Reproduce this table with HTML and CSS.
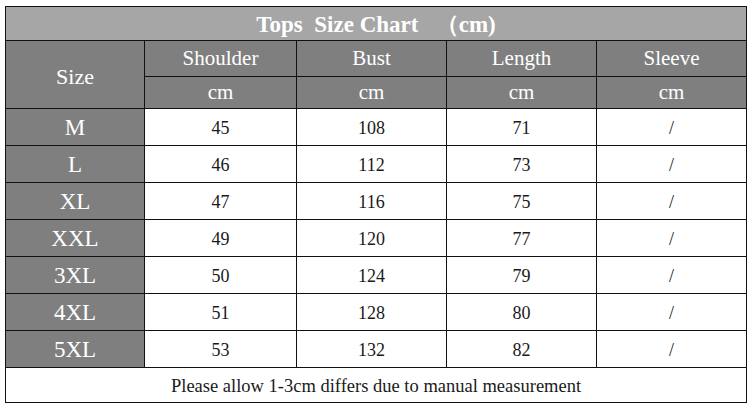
FILE: index.html
```html
<!DOCTYPE html>
<html>
<head>
<meta charset="utf-8">
<link rel="stylesheet" href="styles.css">
</head>
<body>
<table class="chart">
  <colgroup>
    <col class="c-size"><col class="c-a"><col class="c-b"><col class="c-c"><col class="c-d">
  </colgroup>
  <tr class="title-row"><td colspan="5" class="title">Tops&nbsp; Size Chart&nbsp;&nbsp; （cm)</td></tr>
  <tr class="head1">
    <td rowspan="2" class="hd size-hd">Size</td>
    <td class="hd">Shoulder</td><td class="hd">Bust</td><td class="hd">Length</td><td class="hd">Sleeve</td>
  </tr>
  <tr class="head2">
    <td class="hd">cm</td><td class="hd">cm</td><td class="hd">cm</td><td class="hd">cm</td>
  </tr>
  <tr class="row"><td class="sz">M</td><td>45</td><td>108</td><td>71</td><td>/</td></tr>
  <tr class="row"><td class="sz">L</td><td>46</td><td>112</td><td>73</td><td>/</td></tr>
  <tr class="row"><td class="sz">XL</td><td>47</td><td>116</td><td>75</td><td>/</td></tr>
  <tr class="row"><td class="sz">XXL</td><td>49</td><td>120</td><td>77</td><td>/</td></tr>
  <tr class="row"><td class="sz">3XL</td><td>50</td><td>124</td><td>79</td><td>/</td></tr>
  <tr class="row"><td class="sz">4XL</td><td>51</td><td>128</td><td>80</td><td>/</td></tr>
  <tr class="row"><td class="sz">5XL</td><td>53</td><td>132</td><td>82</td><td>/</td></tr>
  <tr class="foot-row"><td colspan="5" class="foot">Please allow 1-3cm differs due to manual measurement</td></tr>
</table>
</body>
</html>
```
FILE: styles.css
```css
html, body {
  margin: 0;
  padding: 0;
  background: #fff;
}
body {
  padding: 6px 0 0 5px;
  font-family: "Liberation Serif", "Times New Roman", serif;
}
.chart {
  border-collapse: collapse;
  table-layout: fixed;
  width: 741px;
  border: 1px solid #111;
}
.c-size { width: 139px; }
.c-a { width: 152px; }
.c-b { width: 150px; }
.c-c { width: 150px; }
.c-d { width: 150px; }
.chart td {
  border: 1px solid #111;
  padding: 0;
  text-align: center;
  vertical-align: middle;
  color: #1a1a1a;
  font-size: 18px;
}
.title-row td { height: 32px; padding-top: 1px; }
.head1 td { height: 35px; }
.head2 td { height: 31px; }
.chart .row td { height: 34px; padding-top: 2px; }
.chart .foot-row td { height: 32px; padding-top: 2px; }
.title {
  background: #a6a6a6;
  color: #fff !important;
  font-weight: bold;
  font-size: 23px !important;
}
.hd {
  background: #7f7f7f;
  color: #fff !important;
  font-size: 21px !important;
}
.size-hd { font-size: 22px !important; padding-top: 4px !important; }
.chart .sz {
  background: #7f7f7f;
  color: #fff;
  font-size: 23px;
}
.foot {
  font-size: 18.5px !important;
}
```
